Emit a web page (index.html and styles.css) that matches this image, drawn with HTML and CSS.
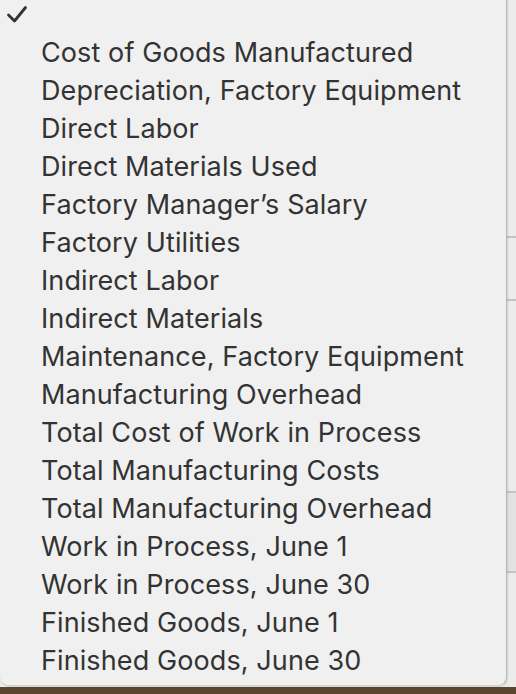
FILE: index.html
```html
<!DOCTYPE html>
<html lang="en">
<head>
  <meta charset="UTF-8" />
  <title>Menu</title>
  <link rel="stylesheet" href="styles.css">
</head>
<body>
  <div class="screen">
    <div class="backdrop">
      <div class="row r1"></div>
      <div class="row r2"></div>
      <div class="row r3"></div>
      <div class="row r4"></div>
    </div>

    <ul class="menu">
      <li class="checked">
        <svg class="check" width="22" height="20" viewBox="0 0 22 20">
          <path d="M2.5 10 L8.5 16 L19.5 2.5" fill="none" stroke="#333" stroke-width="2.8" stroke-linecap="round" stroke-linejoin="round"/>
        </svg>
      </li>
      <li>Cost of Goods Manufactured</li>
      <li>Depreciation, Factory Equipment</li>
      <li>Direct Labor</li>
      <li>Direct Materials Used</li>
      <li>Factory Manager’s Salary</li>
      <li>Factory Utilities</li>
      <li>Indirect Labor</li>
      <li>Indirect Materials</li>
      <li>Maintenance, Factory Equipment</li>
      <li>Manufacturing Overhead</li>
      <li>Total Cost of Work in Process</li>
      <li>Total Manufacturing Costs</li>
      <li>Total Manufacturing Overhead</li>
      <li>Work in Process, June 1</li>
      <li>Work in Process, June 30</li>
      <li>Finished Goods, June 1</li>
      <li>Finished Goods, June 30</li>
    </ul>
  </div>
</body>
</html>
```

FILE: styles.css
```css
html, body {
  margin: 0;
  padding: 0;
}
body {
  width: 516px;
  height: 694px;
  overflow: hidden;
  background: #5b4531;
  font-family: Inter, "Liberation Sans", sans-serif;
}
.screen {
  position: relative;
  width: 516px;
  height: 694px;
  overflow: hidden;
}

/* window behind the menu, only a strip shows on the right */
.backdrop {
  height: 687px;
  background: #ececec;
  display: flex;
  flex-direction: column;
}
.row {
  border-bottom: 2px solid #c4c4c4;
}
.r1 { height: 236px; }
.r2 { height: 61px; }
.r3 { height: 190px; }
.r4 { height: 78px; background: #e3e3e3; }

/* popup menu */
.menu {
  position: absolute;
  top: -4px;
  left: 0;
  width: 506px;
  margin: 0;
  padding: 0 0 5px 0;
  list-style: none;
  background: #f0f0f0;
  border-right: 1px solid #b9b9b9;
  border-bottom: 1px solid #d0d0d0;
  border-radius: 0 0 9px 9px;
  box-shadow: 1px 1px 2px rgba(0, 0, 0, 0.12);
}
.menu li {
  height: 38px;
  line-height: 38px;
  padding-left: 41px;
  font-size: 27px;
  letter-spacing: 0.1px;
  color: #333;
  white-space: nowrap;
}
.menu li.checked {
  position: relative;
}
.check {
  position: absolute;
  left: 6px;
  top: 9px;
}
```
